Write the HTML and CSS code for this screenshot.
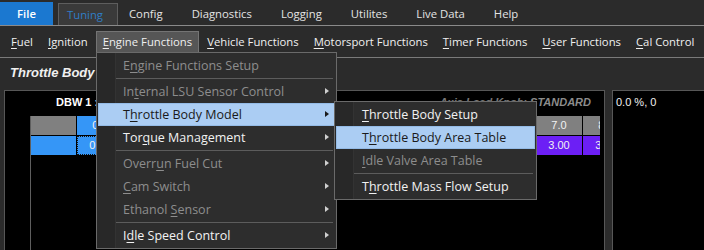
FILE: index.html
```html
<!DOCTYPE html>
<html lang="en">
<head>
    <meta charset="UTF-8">
    <meta name="viewport" content="width=device-width, initial-scale=1.0">
    <title>Tuning - Throttle Body Area Table</title>
    <link rel="stylesheet" href="styles.css">
</head>
<body>
    <div class="tabs">
        <div class="tab tab-file">File</div>
        <div class="tab tab-active">Tuning</div>
        <div class="tab">Config</div>
        <div class="tab">Diagnostics</div>
        <div class="tab">Logging</div>
        <div class="tab">Utilites</div>
        <div class="tab">Live Data</div>
        <div class="tab">Help</div>
    </div>

    <div class="menubar">
        <div class="menubar-item"><u>F</u>uel</div>
        <div class="menubar-item"><u>I</u>gnition</div>
        <div class="menubar-item open"><u>E</u>ngine Functions</div>
        <div class="menubar-item"><u>V</u>ehicle Functions</div>
        <div class="menubar-item"><u>M</u>otorsport Functions</div>
        <div class="menubar-item"><u>T</u>imer Functions</div>
        <div class="menubar-item"><u>U</u>ser Functions</div>
        <div class="menubar-item"><u>C</u>al Control</div>
    </div>

    <div class="window-title">Throttle Body Area Table</div>

    <div class="workspace">
        <div class="table-panel">
            <div class="table-head">
                <span class="table-name">DBW 1 : Throttle Body Area</span>
                <span class="table-mode"><span class="mode-label">Axis Load Knob:</span> STANDARD</span>
            </div>
            <div class="grid">
                <div class="grid-row">
                    <div class="cell cell-head"></div>
                    <div class="cell cell-sel">0.0</div>
                    <div class="cell cell-head cell-fill"></div>
                    <div class="cell cell-head">7.0</div>
                    <div class="cell cell-head cell-cut">8.0</div>
                </div>
                <div class="grid-row">
                    <div class="cell cell-sel"></div>
                    <div class="cell cell-sel cell-focus">0.00</div>
                    <div class="cell cell-value cell-fill"></div>
                    <div class="cell cell-value">3.00</div>
                    <div class="cell cell-value cell-cut">3.50</div>
                </div>
            </div>
        </div>
        <div class="live-panel">0.0 %, 0</div>
    </div>

    <div class="dropdown">
        <div class="menu-item disabled">E<u>n</u>gine Functions Setup</div>
        <div class="menu-sep"></div>
        <div class="menu-item disabled has-sub">In<u>t</u>ernal LSU Sensor Control</div>
        <div class="menu-item has-sub hot">T<u>h</u>rottle Body Model</div>
        <div class="menu-item has-sub">Tor<u>q</u>ue Management</div>
        <div class="menu-sep"></div>
        <div class="menu-item disabled has-sub">Overr<u>u</u>n Fuel Cut</div>
        <div class="menu-item disabled has-sub"><u>C</u>am Switch</div>
        <div class="menu-item disabled has-sub">Ethanol <u>S</u>ensor</div>
        <div class="menu-sep"></div>
        <div class="menu-item has-sub">I<u>d</u>le Speed Control</div>
    </div>

    <div class="dropdown submenu">
        <div class="menu-item"><u>T</u>hrottle Body Setup</div>
        <div class="menu-item hot">T<u>h</u>rottle Body Area Table</div>
        <div class="menu-item disabled"><u>I</u>dle Valve Area Table</div>
        <div class="menu-sep"></div>
        <div class="menu-item">T<u>h</u>rottle Mass Flow Setup</div>
    </div>
</body>
</html>
```

FILE: styles.css
```css
* {
    box-sizing: border-box;
}

body {
    position: relative;
    width: 704px;
    height: 250px;
    margin: 0;
    overflow: hidden;
    background-color: #2b2b2b;
    color: #f0f0f0;
    font-family: "Open Sans", "Segoe UI", sans-serif;
    font-size: 11.3px;
}

u {
    text-decoration: underline;
    text-underline-offset: 2px;
}

/* ribbon tabs */
.tabs {
    display: flex;
    align-items: flex-end;
    height: 26px;
    border-bottom: 1px solid #8a8a8a;
}

.tab {
    flex-shrink: 0;
    padding: 0 14.5px;
    line-height: 22px;
    white-space: nowrap;
    color: #e4e4e4;
}

.tab-file {
    width: 53px;
    height: 23px;
    padding: 0;
    line-height: 23px;
    text-align: center;
    background-color: #1b78d0;
    color: #fff;
    font-weight: 600;
}

.tab-active {
    width: 60px;
    height: 22px;
    margin-left: 5px;
    margin-right: -3.5px;
    padding: 0 0 0 8px;
    line-height: 21px;
    background-color: #3a3a3a;
    border: 1px solid #5e5e5e;
    border-bottom: 0;
    color: #2f7dc6;
}

/* menu strip */
.menubar {
    display: flex;
    gap: 1px;
    height: 32px;
    padding: 5px 0 0 4px;
    border-bottom: 1px solid #7a7a7a;
}

.menubar-item {
    flex-shrink: 0;
    height: 22px;
    padding: 0 6px;
    border: 1px solid transparent;
    line-height: 20px;
    white-space: nowrap;
}

.menubar-item.open {
    background-color: #565656;
    border-color: #747474;
}

.window-title {
    height: 32px;
    padding-left: 10px;
    line-height: 30px;
    font-family: "Liberation Sans", Arial, sans-serif;
    font-size: 13px;
    font-weight: bold;
    font-style: italic;
}

/* table windows */
.workspace {
    display: flex;
    height: 160px;
}

.table-panel {
    display: flex;
    flex-direction: column;
    width: 601px;
    height: 170px;
    margin-left: 4px;
    background-color: #000;
    border: 1px solid #575757;
}

.table-head {
    display: flex;
    justify-content: space-between;
    height: 25px;
    padding: 4px 13px 0 51px;
    line-height: 15px;
    font-family: "Liberation Sans", Arial, sans-serif;
    font-weight: bold;
    white-space: nowrap;
}

.table-name {
    font-size: 11px;
    color: #fff;
}

.table-mode {
    font-size: 11px;
    font-style: italic;
    color: #8c8c8c;
}

.mode-label {
    color: #777;
}

.grid {
    display: flex;
    flex-direction: column;
    gap: 1px;
    width: 570px;
    flex: 1;
    margin-left: 25px;
    overflow: hidden;
    border-left: 1px solid #5e5e5e;
}

.grid-row {
    display: flex;
    gap: 1px;
    width: 599px;
    height: 19px;
    margin-left: -1px;
    flex-shrink: 0;
}

.cell {
    width: 46px;
    flex-shrink: 0;
    line-height: 19px;
    text-align: center;
    font-family: "Liberation Sans", Arial, sans-serif;
    font-size: 11px;
    color: #f2f2f2;
}

.cell-fill {
    flex: 1;
}

.cell-cut {
    overflow: hidden;
}

.cell-head {
    background-color: #808080;
}

.cell-sel {
    background-color: #3596f7;
}

.cell-value {
    background-color: #6c1ff5;
}

.cell-focus {
    outline: 1px dotted #111;
    outline-offset: -1px;
}

.live-panel {
    flex: 1;
    height: 170px;
    margin-left: 7px;
    padding: 4px 3px;
    background-color: #000;
    border-top: 1px solid #575757;
    border-left: 1px solid #575757;
    font-family: "Liberation Sans", Arial, sans-serif;
    font-size: 11px;
    line-height: 14px;
}

/* drop down menus */
.dropdown {
    position: absolute;
    left: 96px;
    top: 52px;
    width: 241px;
    padding: 1px;
    background: linear-gradient(to right, #282828 0, #282828 18px, #333 18px, #333 19px, #2d2d2d 19px);
    border: 1px solid #6a6a6a;
    font-size: 12.5px;
}

.submenu {
    left: 334px;
    top: 101px;
    width: 203px;
}

.menu-item {
    position: relative;
    height: 23px;
    padding-left: 24px;
    border: 1px solid transparent;
    line-height: 21px;
    white-space: nowrap;
    color: #f2f2f2;
}

.submenu .menu-item {
    padding-left: 25px;
}

.menu-item.disabled {
    color: #8d8d8d;
}

.menu-item.hot {
    background-color: #abcdf3;
    border-color: #94bbe6;
    color: #1a1a1a;
}

.menu-item.has-sub::after {
    content: "";
    position: absolute;
    right: 5px;
    top: 7px;
    border-left: 4px solid #cfcfcf;
    border-top: 3.5px solid transparent;
    border-bottom: 3.5px solid transparent;
}

.menu-item.hot.has-sub::after {
    border-left-color: #1a1a1a;
}

.menu-sep {
    height: 1px;
    margin: 1px 2px 1px 18px;
    background-color: #5c5c5c;
}
```
